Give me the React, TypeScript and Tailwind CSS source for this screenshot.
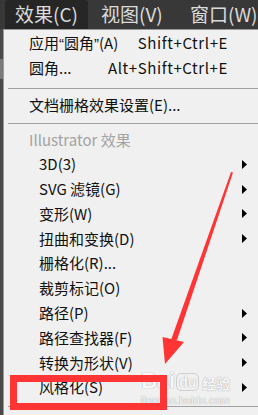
import React from "react";

type Item = { label: React.ReactNode; key: string; shortcut?: string; sub?: boolean };

const Q = ({ c }: { c: string }) => <span style={{ fontFamily: '"Liberation Sans", sans-serif' }}>{c}</span>;

const topItems: Item[] = [
  {
    key: "apply",
    label: (
      <>
        应用<Q c="“" />圆角<Q c="”" />(A)
      </>
    ),
    shortcut: "Shift+Ctrl+E",
  },
  { key: "round", label: "圆角...", shortcut: "Alt+Shift+Ctrl+E" },
];

const effects: Item[] = [
  { key: "3d", label: "3D(3)", sub: true },
  { key: "svg", label: "SVG 滤镜(G)", sub: true },
  { key: "warp", label: "变形(W)", sub: true },
  { key: "distort", label: "扭曲和变换(D)", sub: true },
  { key: "raster", label: "栅格化(R)..." },
  { key: "crop", label: "裁剪标记(O)" },
  { key: "path", label: "路径(P)", sub: true },
  { key: "pathfinder", label: "路径查找器(F)", sub: true },
  { key: "shape", label: "转换为形状(V)", sub: true },
  { key: "stylize", label: "风格化(S)", sub: true },
];

function SubArrow() {
  return (
    <svg width="5" height="9" viewBox="0 0 5 9" className="shrink-0">
      <path d="M0 0 L5 4.5 L0 9 Z" fill="#000" />
    </svg>
  );
}

function Separator({ className }: { className: string }) {
  return <div className={`ml-[4px] h-px bg-[#a0a0a0] ${className}`} />;
}

export default function App() {
  return (
    <div
      className="relative w-[258px] h-[415px] overflow-hidden bg-[#383838] flex flex-col"
      style={{ fontFamily: '"Noto Sans CJK SC", "Noto Sans", sans-serif' }}
    >
      <div className="h-[29px] flex items-end pl-[5px] text-[19px] text-[#dcdcdc] shrink-0 whitespace-nowrap">
        <div className="w-[83px] h-[29px] bg-[#262626] rounded-t-[3px] pl-[10px] flex items-center">效果(C)</div>
        <div className="h-[29px] pl-[13px] w-[102px] flex items-center">视图(V)</div>
        <div className="h-[29px] flex items-center">窗口(W)</div>
      </div>

      <div className="flex flex-1">
        <div className="w-[3px] bg-[#4a4a4a] flex flex-col">
          <div className="h-[30px]" />
          <div className="h-[20px] bg-[#7a7a7a]" />
        </div>
        <div className="flex-1 bg-[#f0f0f0] border-l border-t border-[#9a9a9a] text-[15px] text-[#111] pt-px">
          {topItems.map((it) => (
            <div key={it.key} className="h-[25px] flex items-center justify-between pl-[25px] pr-[30px] whitespace-nowrap">
              <span>{it.label}</span>
              <span className="tracking-[0.6px]">{it.shortcut}</span>
            </div>
          ))}
          <Separator className="mt-[7px] mb-[4px]" />
          <div className="h-[25px] flex items-center pl-[25px]">文档栅格效果设置(E)...</div>
          <Separator className="mt-[5px]" />
          <div className="h-[28px] flex items-center pl-[25px] pt-[4px] text-[#a3a3a3]">Illustrator 效果</div>
          {effects.map((it) => (
            <div key={it.key} className="h-[24.8px] flex items-center justify-between pl-[35px] pr-[11px] whitespace-nowrap">
              <span>{it.label}</span>
              {it.sub && <SubArrow />}
            </div>
          ))}
          <Separator className="mt-[6px]" />
        </div>
      </div>

      {/* watermark */}
      <div className="absolute left-[141px] top-[368px] flex flex-col items-start text-[#f7f7f7] [text-shadow:0_0_1px_#b0b0b0,0_0_1px_#b0b0b0] font-['Liberation_Sans',sans-serif]">
        <div className="flex items-end">
          <span className="text-[22px] leading-[26px] font-bold">Bai</span>
          <span className="mb-[3px] ml-[1px] px-[2px] rounded-[5px] border border-[#d0d0d0] text-[14px] leading-[16px] font-bold">du</span>
          <span className="ml-[3px] text-[14px] leading-[21px] font-bold font-['Noto_Sans_CJK_SC',sans-serif]">经验</span>
        </div>
        <span className="text-[11px] leading-[13px]">jingyan.baidu.com</span>
      </div>

      <div className="absolute left-[10px] top-[375px] w-[157px] h-[35px] border-[7px] border-[#ff3535]" />

      <svg className="absolute left-0 top-0" width="258" height="415" viewBox="0 0 258 415">
        <polygon points="231,172 233,172.5 177,340 171,340" fill="#ff3535" />
        <polygon points="162.5,337 184,342 165,364" fill="#ff3535" />
      </svg>
    </div>
  );
}
